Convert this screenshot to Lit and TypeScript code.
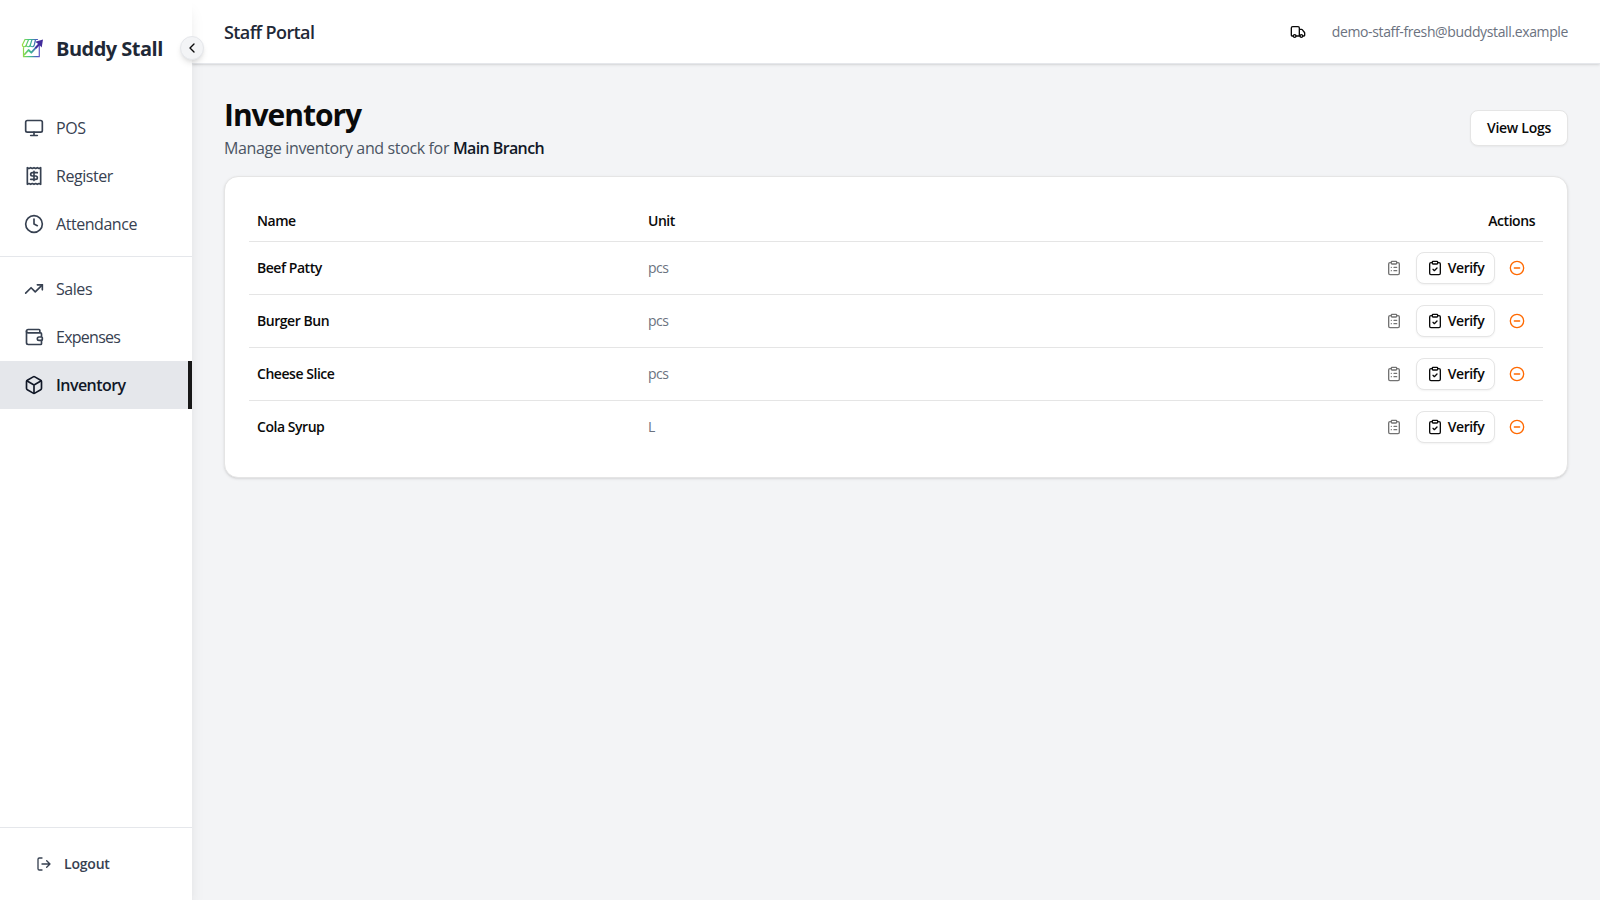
import { LitElement, html, css, svg } from "lit";
import { customElement } from "lit/decorators.js";

const icons: Record<string, unknown> = {
  monitor: svg`<rect width="20" height="14" x="2" y="3" rx="2"/><path d="M8 21h8M12 17v4"/>`,
  receipt: svg`<path d="M4 2v20l2-1 2 1 2-1 2 1 2-1 2 1 2-1 2 1V2l-2 1-2-1-2 1-2-1-2 1-2-1-2 1Z"/><path d="M16 8h-6a2 2 0 1 0 0 4h4a2 2 0 1 1 0 4H8M12 17.5v-11"/>`,
  clock: svg`<circle cx="12" cy="12" r="10"/><path d="M12 6v6l4 2"/>`,
  trend: svg`<path d="m22 7-8.5 8.5-5-5L2 17"/><path d="M16 7h6v6"/>`,
  wallet: svg`<path d="M19 7V4a1 1 0 0 0-1-1H5a2 2 0 0 0 0 4h15a1 1 0 0 1 1 1v4h-3a2 2 0 0 0 0 4h3a1 1 0 0 0 1-1v-2a1 1 0 0 0-1-1"/><path d="M3 5v14a2 2 0 0 0 2 2h15a1 1 0 0 0 1-1v-4"/>`,
  box: svg`<path d="M21 8a2 2 0 0 0-1-1.73l-7-4a2 2 0 0 0-2 0l-7 4A2 2 0 0 0 3 8v8a2 2 0 0 0 1 1.73l7 4a2 2 0 0 0 2 0l7-4A2 2 0 0 0 21 16Z"/><path d="m3.3 7 8.7 5 8.7-5M12 22V12"/>`,
  logout: svg`<path d="M9 21H5a2 2 0 0 1-2-2V5a2 2 0 0 1 2-2h4M16 17l5-5-5-5M21 12H9"/>`,
  chevron: svg`<path d="m15 18-6-6 6-6"/>`,
  truck: svg`<path d="M14 18V6a2 2 0 0 0-2-2H4a2 2 0 0 0-2 2v11a1 1 0 0 0 1 1h2M15 18H9M19 18h2a1 1 0 0 0 1-1v-3.65a1 1 0 0 0-.22-.624l-3.48-4.35A1 1 0 0 0 17.52 8H14"/><circle cx="17" cy="18" r="2"/><circle cx="7" cy="18" r="2"/>`,
  list: svg`<rect width="8" height="4" x="8" y="2" rx="1"/><path d="M16 4h2a2 2 0 0 1 2 2v14a2 2 0 0 1-2 2H6a2 2 0 0 1-2-2V6a2 2 0 0 1 2-2h2M12 11h4M12 16h4M8 11h.01M8 16h.01"/>`,
  check: svg`<rect width="8" height="4" x="8" y="2" rx="1"/><path d="M16 4h2a2 2 0 0 1 2 2v14a2 2 0 0 1-2 2H6a2 2 0 0 1-2-2V6a2 2 0 0 1 2-2h2M9 14l2 2 4-4"/>`,
  minus: svg`<circle cx="12" cy="12" r="10"/><path d="M8 12h8"/>`,
};

const icon = (name: string, size = 16) =>
  html`<svg class="icon" width=${size} height=${size} viewBox="0 0 24 24">${icons[name]}</svg>`;

const groups = [
  [
    { label: "POS", icon: "monitor", cls: "" },
    { label: "Register", icon: "receipt", cls: "" },
    { label: "Attendance", icon: "clock", cls: "" },
  ],
  [
    { label: "Sales", icon: "trend", cls: "" },
    { label: "Expenses", icon: "wallet", cls: "tight" },
    { label: "Inventory", icon: "box", cls: "active" },
  ],
];

const items = [
  { name: "Beef Patty", unit: "pcs" },
  { name: "Burger Bun", unit: "pcs" },
  { name: "Cheese Slice", unit: "pcs" },
  { name: "Cola Syrup", unit: "L" },
];

@customElement("app-root")
export class AppRoot extends LitElement {
  static styles = css`
    :host {
      display: flex;
      height: 100vh;
      overflow: hidden;
      background: #f3f4f6;
      color: #0a0a0a;
      font-family: "Segoe UI", "Open Sans", "Noto Sans", sans-serif;
      font-size: 14px;
      line-height: 20px;
    }
    * { box-sizing: border-box; }
    button { font: inherit; color: inherit; margin: 0; letter-spacing: inherit; white-space: nowrap; }
    .icon {
      display: block;
      flex: none;
      fill: none;
      stroke: currentColor;
      stroke-width: 2;
      stroke-linecap: round;
      stroke-linejoin: round;
    }
    .sidebar {
      position: relative;
      z-index: 1;
      flex: none;
      width: 192px;
      display: flex;
      flex-direction: column;
      background: #fff;
      box-shadow: 0 10px 15px -3px rgba(0,0,0,.1), 0 4px 6px -4px rgba(0,0,0,.1);
    }
    .brand {
      display: flex;
      align-items: center;
      gap: 12px;
      height: 96px;
      padding-left: 20px;
    }
    .brand-name {
      padding-top: 2px;
      font-size: 20px;
      line-height: 28px;
      font-weight: 700;
      color: #1f2937;
      letter-spacing: -0.52px;
      white-space: nowrap;
    }
    .toggle {
      position: absolute;
      top: 36px;
      right: -12px;
      width: 24px;
      height: 24px;
      display: grid;
      place-items: center;
      padding: 0;
      border: 1px solid #e5e7eb;
      border-radius: 50%;
      background: #f3f4f6;
      box-shadow: 0 4px 6px -1px rgba(0,0,0,.1), 0 2px 4px -2px rgba(0,0,0,.1);
    }
    .nav { flex: 1; padding-top: 8px; }
    .group + .group { margin-top: 8px; padding-top: 8px; border-top: 1px solid #e5e7eb; }
    .link {
      display: flex;
      align-items: center;
      gap: 12px;
      height: 48px;
      padding-left: 24px;
      font-size: 16px;
      line-height: 24px;
      color: #374151;
      letter-spacing: -0.45px;
    }
    .tight { letter-spacing: -0.74px; }
    .active {
      background: #e5e7eb;
      border-right: 4px solid #171717;
      color: #111827;
      font-weight: 600;
      letter-spacing: -0.55px;
    }
    .foot { border-top: 1px solid #e5e7eb; padding: 16px; }
    .logout {
      display: flex;
      align-items: center;
      gap: 12px;
      width: 100%;
      height: 40px;
      padding: 0 0 0 20px;
      border: 0;
      background: none;
      color: #374151;
      font-weight: 600;
      letter-spacing: -0.2px;
    }
    .main { flex: 1; min-width: 0; }
    .topbar {
      display: flex;
      align-items: center;
      justify-content: space-between;
      height: 64px;
      padding: 0 32px;
      background: #fff;
      border-bottom: 1px solid #e5e7eb;
      box-shadow: 0 1px 3px rgba(0,0,0,.1), 0 1px 2px -1px rgba(0,0,0,.1);
    }
    .portal { font-size: 18px; line-height: 28px; font-weight: 600; color: #1f2937; letter-spacing: -0.6px; }
    .user { display: flex; align-items: center; gap: 26px; }
    .email { color: #6b7280; letter-spacing: -0.37px; }
    .content { padding: 32px; }
    .head { display: flex; align-items: center; justify-content: space-between; height: 64px; margin-bottom: 16px; }
    .title { margin: 0; padding-top: 1px; height: 36px; font-size: 30px; line-height: 36px; font-weight: 700; letter-spacing: -1.05px; }
    .sub { margin: 4px 0 0; font-size: 16px; line-height: 24px; color: #4b5563; letter-spacing: -0.36px; }
    .branch { font-weight: 600; color: #111827; letter-spacing: -0.6px; }
    .btn {
      display: flex;
      align-items: center;
      justify-content: center;
      border: 1px solid #e5e5e5;
      background: #fff;
      box-shadow: 0 1px 2px rgba(0,0,0,.05);
      font-weight: 600;
      padding: 0;
    }
    .logs { width: 98px; height: 36px; border-radius: 8px; letter-spacing: -0.28px; }
    .card {
      padding: 24px;
      border: 1px solid #e5e5e5;
      border-radius: 14px;
      background: #fff;
      box-shadow: 0 1px 3px rgba(0,0,0,.1), 0 1px 2px -1px rgba(0,0,0,.1);
    }
    .row {
      display: grid;
      grid-template-columns: 391px 1fr auto;
      align-items: center;
      height: 53px;
      border-bottom: 1px solid #e5e5e5;
    }
    .row:last-child { height: 52px; border-bottom: 0; }
    .thead { height: 41px; }
    .cell { padding: 0 8px; font-weight: 600; letter-spacing: -0.46px; }
    .unit { color: #6b7280; font-weight: 400; }
    .actions { display: flex; align-items: center; gap: 4px; padding: 0 8px; letter-spacing: -0.5px; }
    .ghost { width: 36px; height: 32px; display: grid; place-items: center; padding: 0; border: 0; background: none; color: #737373; }
    .orange { color: #ff6900; }
    .verify { width: 79px; height: 32px; gap: 5px; border-radius: 8px; }
  `;

  private logo() {
    return html`<svg width="24" height="24" viewBox="0 0 24 24" fill="none" stroke-linecap="round" stroke-linejoin="round">
      <defs>
        <linearGradient id="g" x1="2" y1="0" x2="22" y2="0" gradientUnits="userSpaceOnUse">
          <stop offset="0" stop-color="#9ee03c"/><stop offset=".4" stop-color="#3cc08c"/>
          <stop offset=".72" stop-color="#4a5fc0"/><stop offset="1" stop-color="#7a55c8"/>
        </linearGradient>
      </defs>
      <g stroke="url(#g)" stroke-width="1.2">
        <path d="M5 3.5h12.5M5 3.5 2.3 9c0 2.3 3.5 2.3 4 0 .3 2.3 3.5 2.3 4 0 .3 2.3 3.4 2.3 4 0M8.6 3.5 6.3 9M12 3.5 10.3 9M15.5 3.5 14.3 9"/>
        <path d="M3.5 11.5v9.2h15.8V9"/>
      </g>
      <path d="m4.5 18.5 4-4.5 2.8 2.7 8-8.8" stroke="url(#g)" stroke-width="1.8"/>
      <path d="m15.3 5.7 7.7-2.2-1.3 7.9-2-2.1-3.5 3.5-1.3-1.4 3.3-3.5Z" fill="#432c9c"/>
    </svg>`;
  }

  render() {
    return html`
      <aside class="sidebar">
        <div class="brand">${this.logo()}<span class="brand-name">Buddy Stall</span></div>
        <button class="toggle" aria-label="Collapse sidebar">${icon("chevron")}</button>
        <nav class="nav">
          ${groups.map((g) => html`<div class="group">
            ${g.map((l) => html`<a class="link ${l.cls}">${icon(l.icon, 20)}<span>${l.label}</span></a>`)}
          </div>`)}
        </nav>
        <div class="foot"><button class="logout">${icon("logout")}<span>Logout</span></button></div>
      </aside>
      <div class="main">
        <header class="topbar">
          <span class="portal">Staff Portal</span>
          <div class="user">${icon("truck")}<span class="email">demo-staff-fresh@buddystall.example</span></div>
        </header>
        <main class="content">
          <div class="head">
            <div>
              <h1 class="title">Inventory</h1>
              <p class="sub">Manage inventory and stock for <span class="branch">Main Branch</span></p>
            </div>
            <button class="btn logs">View Logs</button>
          </div>
          <section class="card">
            <div class="row thead">
              <span class="cell">Name</span><span class="cell">Unit</span><span class="cell">Actions</span>
            </div>
            ${items.map((i) => html`<div class="row">
              <span class="cell">${i.name}</span>
              <span class="cell unit">${i.unit}</span>
              <div class="actions">
                <button class="ghost" aria-label="Logs">${icon("list")}</button>
                <button class="btn verify">${icon("check")}<span>Verify</span></button>
                <button class="ghost orange" aria-label="Deduct">${icon("minus")}</button>
              </div>
            </div>`)}
          </section>
        </main>
      </div>
    `;
  }
}
